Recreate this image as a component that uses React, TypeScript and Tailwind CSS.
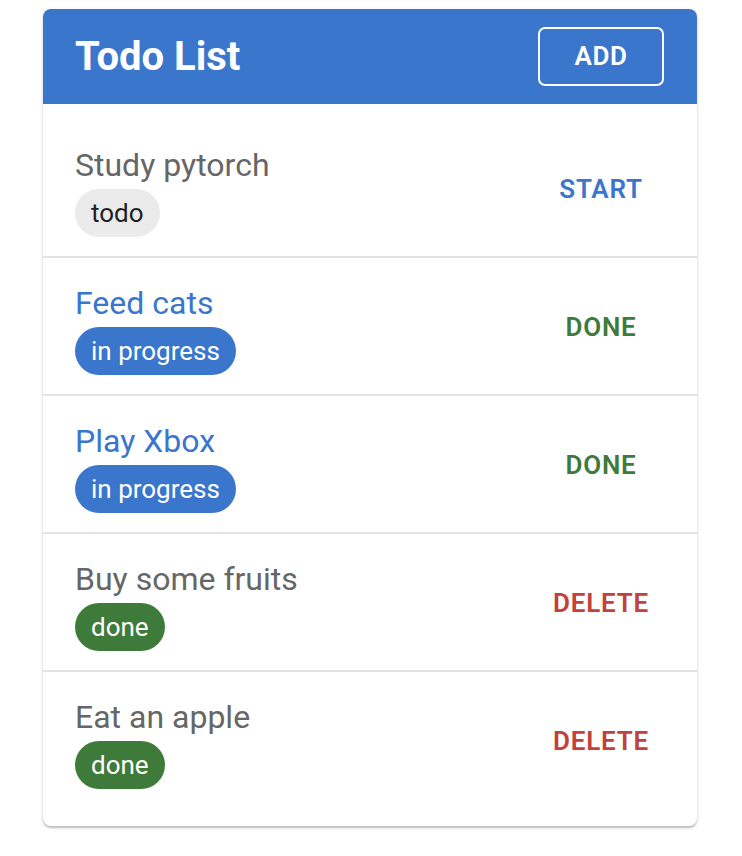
const todos = [
  { title: "Study pytorch", status: "todo" },
  { title: "Feed cats", status: "in progress" },
  { title: "Play Xbox", status: "in progress" },
  { title: "Buy some fruits", status: "done" },
  { title: "Eat an apple", status: "done" },
];

const chipClass: Record<string, string> = {
  todo: "bg-[#ebebeb] text-[#1f1f1f]",
  "in progress": "bg-[#3a76cc] text-white",
  done: "bg-[#3e7b3a] text-white",
};

const action: Record<string, { label: string; color: string }> = {
  todo: { label: "START", color: "text-[#3a76cc]" },
  "in progress": { label: "DONE", color: "text-[#3e7b3a]" },
  done: { label: "DELETE", color: "text-[#c4403a]" },
};

export default function App() {
  return (
    <div className="min-h-[856px] bg-white pt-[9px] font-['Roboto',sans-serif]">
      <div className="ml-[43px] w-[654px] overflow-hidden rounded-lg bg-white shadow-[0_2px_2px_rgba(0,0,0,0.22),0_1px_5px_rgba(0,0,0,0.08)]">
        {/* header */}
        <div className="flex h-[95px] items-center justify-between bg-[#3a76cc] pl-[32px] pr-[33px]">
          <h1 className="text-[40px] font-bold leading-none text-white">Todo List</h1>
          <button className="flex h-[59px] w-[126px] items-center justify-center rounded-[7px] border-2 border-white text-[26px] font-semibold tracking-[0.02em] text-white">
            ADD
          </button>
        </div>

        {/* list */}
        <ul className="pt-4 pb-[18px]">
          {todos.map((t, i) => {
            const a = action[t.status];
            return (
              <li
                key={t.title}
                className={`flex items-center justify-between pt-[21px] pb-[19px] pl-[32px] pr-8 ${
                  i < todos.length - 1 ? "border-b-2 border-[#e2e2e2]" : ""
                }`}
              >
                <div className="flex flex-col items-start">
                  <span
                    className={`text-[32px] leading-[48px] ${
                      t.status === "in progress" ? "text-[#3a76cc]" : "text-[#666666]"
                    }`}
                  >
                    {t.title}
                  </span>
                  <span
                    className={`flex h-12 items-center rounded-full px-4 text-[26px] ${chipClass[t.status]}`}
                  >
                    {t.status}
                  </span>
                </div>
                <button
                  className={`w-32 text-center text-[26px] font-semibold tracking-[0.03em] ${a.color}`}
                >
                  {a.label}
                </button>
              </li>
            );
          })}
        </ul>
      </div>
    </div>
  );
}
